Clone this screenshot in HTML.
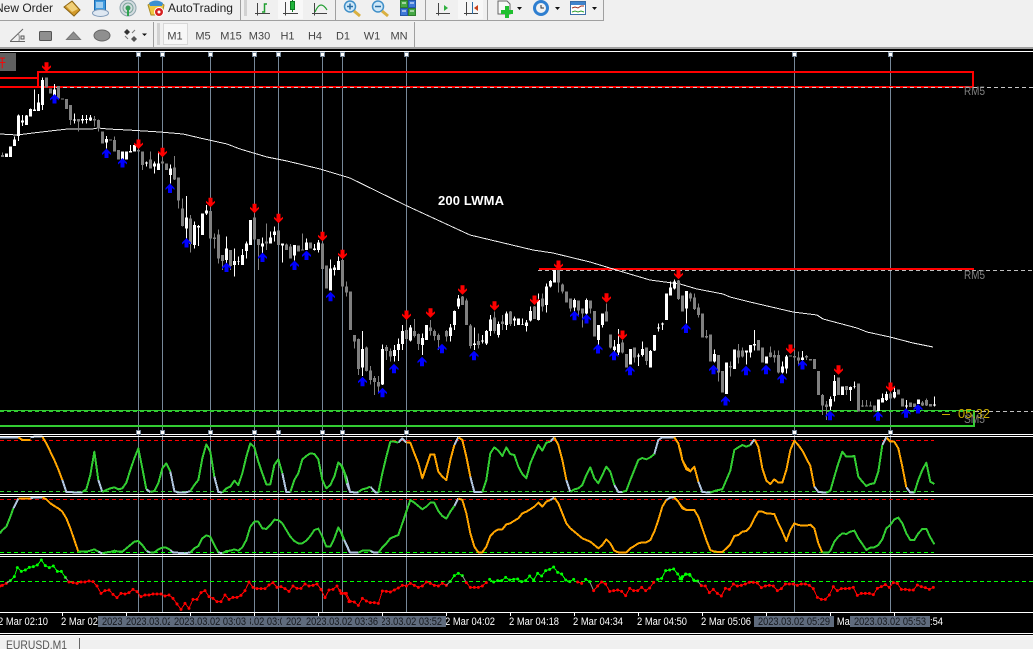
<!DOCTYPE html>
<html><head><meta charset="utf-8"><title>EURUSD.M1</title>
<style>
html,body{margin:0;padding:0;width:1033px;height:649px;overflow:hidden;background:#f0f0f0}
svg{display:block;font-family:"Liberation Sans","Noto Sans CJK SC",sans-serif}
.cw,.cb,.gw,.gb{fill:none;shape-rendering:crispEdges}
.cw{stroke:#fff;stroke-width:3}.cb{stroke:#fff;stroke-width:9}
.gw{stroke:#808080;stroke-width:3}.gb{stroke:#808080;stroke-width:9}
.o,.g,.s{fill:none;stroke-width:6;stroke-linejoin:round;shape-rendering:crispEdges}
.o{stroke:#ffa500}.g{stroke:#32cd32}.s{stroke:#b0c4de}
.r3,.g3{fill:none;stroke-width:3;shape-rendering:crispEdges}
.r3{stroke:#f00;marker-start:url(#mr);marker-mid:url(#mr);marker-end:url(#mr)}
.g3{stroke:#0f0;marker-start:url(#mg);marker-mid:url(#mg);marker-end:url(#mg)}
.y3{fill:none;stroke:#999;stroke-width:3}
.t{fill:#fff;font-size:11px}
.d{fill:#15181d;font-size:11px}
.tf{fill:#444;font-size:11px;text-anchor:middle}
.v{stroke:#778899;stroke-width:1;shape-rendering:crispEdges}
.h{fill:#fff;stroke:#778899;stroke-width:1;shape-rendering:crispEdges}
.ax{fill:none;stroke:#444;stroke-width:1;shape-rendering:crispEdges}
.sep{stroke:#a0a0a0;stroke-width:1;shape-rendering:crispEdges}
</style></head><body>
<svg width="1033" height="649" viewBox="0 0 1033 649" xmlns="http://www.w3.org/2000/svg">
<defs>
<marker id="mr" markerUnits="userSpaceOnUse" markerWidth="12" markerHeight="12" refX="6" refY="6"><circle cx="6" cy="6" r="4.5" fill="#f00"/></marker>
<marker id="mg" markerUnits="userSpaceOnUse" markerWidth="12" markerHeight="12" refX="6" refY="6"><circle cx="6" cy="6" r="4.5" fill="#0f0"/></marker>
<polygon id="u" fill="#00f" points="0,0 4.5,4.500 4.500,6.500 2,4.500 2,9.500 -2,9.500 -2,4.500 -4.500,6.500 -4.500,4.500"/>
<polygon id="n" fill="#f00" points="0,0 4.500,-4.500 4.500,-6.500 2,-4.500 2,-9.500 -2,-9.500 -2,-4.500 -4.500,-6.500 -4.500,-4.500"/>
</defs>

<!-- toolbars -->
<rect width="1033" height="48" fill="#f0f0f0"/>
<rect x="0" y="20" width="603" height="1" fill="#a0a0a0"/>
<rect x="603" y="0" width="1" height="21" fill="#a0a0a0"/>
<rect x="0" y="47" width="1033" height="2" fill="#a0a0a0"/>
<text x="-5" y="12" font-size="12" fill="#222">New Order</text>
<text x="168" y="12" font-size="12" fill="#222">AutoTrading</text>

<!-- order book -->
<polygon points="72,1 80,10 74,16 64,7" fill="#d39a2a" stroke="#8a6414" stroke-width="1"/>
<polygon points="72,2 78,9 72,12 66,6" fill="#f0cf78"/>
<!-- market watch doc + cloud -->
<rect x="94.500" y="0" width="11" height="10" fill="#3f9be0" stroke="#1d6bb0"/>
<path d="M96 3h7M96 5h7M96 7h7" stroke="#fff"/>
<ellipse cx="100.500" cy="13" rx="8" ry="3.500" fill="#dfe8f2" stroke="#7f9ab8"/>
<!-- signal -->
<circle cx="128" cy="8" r="8" fill="#d5dde0" stroke="#8fa5ad"/>
<circle cx="128" cy="8" r="5" fill="none" stroke="#7ba59a"/>
<circle cx="128" cy="8" r="2.500" fill="#3c9a5c"/>
<path d="M128 8v8" stroke="#2fa44f" stroke-width="2"/>
<!-- autotrading -->
<path d="M148 5q8-6 16 0l-2 10h-11z" fill="#f0c840" stroke="#a88a25"/>
<path d="M149 3q7-5 14 0l-1 3h-12z" fill="#3b8fd0"/>
<circle cx="159" cy="12" r="4.500" fill="#d62020" stroke="#fff"/>
<circle cx="159" cy="12" r="1.500" fill="#fff"/>

<line class="sep" x1="240.500" y1="0" x2="240.500" y2="20"/>
<path d="M244 1h3M244 3h3M244 5h3M244 7h3M244 9h3M244 11h3M244 13h3M244 15h3" stroke="#b4b4b4" stroke-width="1" shape-rendering="crispEdges"/>
<!-- bar chart -->
<path class="ax" d="M257.500 3V15.500M255 13.500H270"/>
<path d="M262 12H264.500V4H267" stroke="#1f9d2f" stroke-width="1.500" fill="none"/>
<!-- candle button -->
<rect x="278" y="0" width="25" height="19" fill="#f8f8f8"/>
<path class="ax" d="M285.500 2V15.500M283 13.500H298"/>
<rect x="290.500" y="1.500" width="4" height="8" fill="#1fb43a" stroke="#0d7a22" shape-rendering="crispEdges"/>
<path d="M292.500 0V12" stroke="#0d7a22" shape-rendering="crispEdges"/>
<rect x="291" y="2" width="3" height="7" fill="#1fb43a"/>
<!-- line chart -->
<path class="ax" d="M314.500 3V15.500M312 13.500H327"/>
<path d="M315 12Q318 5 321 5T327 10" fill="none" stroke="#1f9d2f" stroke-width="1.200"/>
<line class="sep" x1="335.500" y1="0" x2="335.500" y2="20"/>
<!-- zoom in -->
<circle cx="350" cy="6.500" r="5.500" fill="#cfe8f8" stroke="#3f8fc8" stroke-width="1.500"/>
<path d="M347 6.500h6M350 3.500v6" stroke="#2a6ea5" stroke-width="1.500"/>
<path d="M354 11l6 5" stroke="#d9b040" stroke-width="3"/>
<!-- zoom out -->
<circle cx="378" cy="6.500" r="5.500" fill="#cfe8f8" stroke="#3f8fc8" stroke-width="1.500"/>
<path d="M375 6.500h6" stroke="#2a6ea5" stroke-width="1.500"/>
<path d="M382 11l6 5" stroke="#d9b040" stroke-width="3"/>
<!-- grid -->
<g shape-rendering="crispEdges">
<rect x="400.500" y="0.500" width="7" height="7" fill="#45a845" stroke="#2e7d2e"/>
<rect x="408.500" y="0.500" width="7" height="7" fill="#3d78d8" stroke="#2456a8"/>
<rect x="400.500" y="8.500" width="7" height="7" fill="#3d78d8" stroke="#2456a8"/>
<rect x="408.500" y="8.500" width="7" height="7" fill="#45a845" stroke="#2e7d2e"/>
<path d="M402 3h4M410 3h4M402 11h4M410 11h4" stroke="#fff"/>
</g>
<line class="sep" x1="425.500" y1="0" x2="425.500" y2="20"/>
<path class="ax" d="M438.500 3V15.500M436 13.500H450"/>
<polygon points="444,5 444,11 448,8" fill="#2fb03f"/>
<rect x="458" y="0" width="25" height="19" fill="#f7f7f7"/>
<path class="ax" d="M466.500 2V15.500M464 13.500H478"/>
<path d="M472.500 2V14" stroke="#2a6ea5" shape-rendering="crispEdges"/>
<polygon points="474,8 478,5 478,11" fill="#c8401a"/>
<line class="sep" x1="487.500" y1="0" x2="487.500" y2="20"/>
<!-- new chart -->
<path d="M498 1h9l3 3v10h-12z" fill="#f8f8f8" stroke="#666"/>
<path d="M507 6v12M501 12h12" stroke="#1fc02f" stroke-width="4"/>
<polygon points="517,7 522,7 519.500,10" fill="#111"/>
<!-- clock -->
<circle cx="541" cy="8" r="8" fill="#2f7fd0"/>
<circle cx="541" cy="8" r="5" fill="#f2f2f2"/>
<path d="M541 5v3h3" stroke="#333" fill="none"/>
<polygon points="555,7 560,7 557.500,10" fill="#111"/>
<!-- templates -->
<rect x="570.500" y="1.500" width="15" height="13" fill="#fff" stroke="#3a6ea8"/>
<rect x="571" y="2" width="14" height="3" fill="#3f83cc"/>
<path d="M572 8l3-1 3 1 3-2 3 0" stroke="#a03020" fill="none"/>
<path d="M572 12l3-1 3 1 3-1 3 1" stroke="#30a030" fill="none"/>
<polygon points="592,7 597,7 594.500,10" fill="#111"/>

<!-- row 2 -->
<path d="M10 41.500H25M10.500 41L23 29" stroke="#666" fill="none"/>
<path d="M18 33q2 3 1 8" stroke="#888" fill="none"/>
<rect x="21" y="36" width="3" height="3" fill="none" stroke="#555"/>
<rect x="39.500" y="31.500" width="12" height="9" rx="1" fill="#8f8f8f" stroke="#555"/>
<polygon points="66.500,39.500 73.500,32 80.500,39.500" fill="#8f8f8f" stroke="#777"/>
<ellipse cx="102" cy="35.500" rx="8" ry="5.500" fill="#8f8f8f" stroke="#666"/>
<polygon points="127,29 130,32 127,35 124,32" fill="#333"/>
<polygon points="134,36 137,39 134,42 131,39" fill="#555"/>
<path d="M125 36l3 3M135 30l-3 3" stroke="#777"/>
<polygon points="142,33.500 147,33.500 144.500,36" fill="#111"/>
<line class="sep" x1="153.500" y1="22" x2="153.500" y2="47"/>
<path d="M157 24h3M157 26h3M157 28h3M157 30h3M157 32h3M157 34h3M157 36h3M157 38h3M157 40h3M157 42h3M157 44h3" stroke="#b4b4b4" stroke-width="1" shape-rendering="crispEdges"/>
<rect x="163.500" y="23.500" width="24" height="21" fill="#f7f7f7" stroke="#d8d8d8"/>
<g>
<text class="tf" x="175" y="39.500">M1</text><text class="tf" x="203" y="39.500">M5</text><text class="tf" x="231" y="39.500">M15</text>
<text class="tf" x="259.500" y="39.500">M30</text><text class="tf" x="287.500" y="39.500">H1</text><text class="tf" x="315" y="39.500">H4</text>
<text class="tf" x="343" y="39.500">D1</text><text class="tf" x="372" y="39.500">W1</text><text class="tf" x="399" y="39.500">MN</text>
</g>
<line class="sep" x1="414.500" y1="22" x2="414.500" y2="47"/>

<!-- chart area -->
<rect x="0" y="49" width="1033" height="587" fill="#000"/>
<rect x="0" y="51" width="1033" height="1" fill="#fff"/>

<!-- vertical lines -->
<path class="v" d="M138.500 52V612M162.500 52V612M210.500 52V612M254.500 52V612M278.500 52V612M322.500 52V612M342.500 52V612M406.500 52V612M794.500 52V612M890.500 52V612"/>

<!-- label top-left -->
<rect x="0" y="53" width="16" height="18" fill="#606060"/>
<text x="-6" y="67" font-size="12" fill="#f00">开</text>

<!-- levels -->
<g shape-rendering="crispEdges">
<rect x="0" y="77" width="38" height="2" fill="#f00"/>
<rect x="37" y="71" width="2" height="17" fill="#f00"/>
<rect x="38" y="71" width="936" height="2" fill="#f00"/>
<rect x="972" y="71" width="2" height="17" fill="#f00"/>
<rect x="0" y="86" width="974" height="2" fill="#f00"/>
<line x1="56" y1="87.500" x2="1033" y2="87.500" stroke="#c8c8c8" stroke-dasharray="4 3"/>
<rect x="539" y="268" width="435" height="2" fill="#f00"/>
<line x1="538" y1="270.500" x2="1033" y2="270.500" stroke="#c0c0c0" stroke-dasharray="4 3"/>
<line x1="975" y1="411.500" x2="1033" y2="411.500" stroke="#c0c0c0" stroke-dasharray="4 3"/>
<rect x="0" y="410" width="974" height="1" fill="#32cd32"/>
<line x1="0" y1="411.500" x2="974" y2="411.500" stroke="#32cd32" stroke-dasharray="4 3"/>
<rect x="0" y="425" width="975" height="2" fill="#32cd32"/>
<rect x="973" y="410" width="2" height="17" fill="#32cd32"/>
</g>
<text x="964" y="95" font-size="12" fill="#808080" textLength="21" lengthAdjust="spacingAndGlyphs">RM5</text>
<text x="964" y="279" font-size="12" fill="#808080" textLength="21" lengthAdjust="spacingAndGlyphs">RM5</text>
<rect x="942" y="414" width="8" height="1" fill="#c9a800"/>
<text x="958" y="418" font-size="13" fill="#c8ac00" textLength="32" lengthAdjust="spacingAndGlyphs">05:32</text>
<text x="964" y="423" font-size="12" fill="#808080" textLength="21" lengthAdjust="spacingAndGlyphs">SM5</text>
<text x="438" y="205" font-size="13" font-weight="bold" fill="#fff" textLength="66">200 LWMA</text>

<!-- 200 LWMA -->
<polyline fill="none" stroke="#eee" stroke-width="1" shape-rendering="crispEdges" points="0,134 17,135 33,133 50,131 68,129 92,129 98,128 108,129 128,130 160,132 183,134 200,138 227,144 240,149 267,157 287,161 320,169 350,178 405,205 470,235 533,250 553,253 590,262 623,272 650,280 680,284 697,289 723,294 730,297 750,302 793,312 817,315 823,319 857,328 867,332 890,337 913,343 933,347"/>

<!-- candles group A -->
<g transform="translate(.17,100) scale(.33333)">
<path class="gw" d="M7 157V171M211 15V75M235 57V95M283 48V80M295 58V95M343 110V155M427 155V210M451 155V205M487 145V195M523 168V240M535 232V325M547 295V380M571 345V458M643 400V445M655 388V490M667 465V510M691 450V510M763 345V418M775 417V510M799 370V450M859 430V450M871 432V475M907 400V450M1027 480V565M1039 545V590"/>
<path class="gb" d="M7 165V171M139 -68V-38M151 -35V-20M175 -42V-5M187 -5V-2M199 -3V27M211 15V60M235 57V65M283 57V62M295 60V85M307 95V130M331 118V122M343 120V155M355 150V178M415 150V155M427 155V195M451 178V205M487 185V190M499 190V210M523 202V238M535 232V302M547 325V378M571 355V432M631 333V415M643 413V417M655 403V475M667 465V483M691 450V498M763 353V418M775 417V435M799 425V430M835 392V435M859 433V450M871 440V475M895 437V455M907 448V452M931 427V445M967 430V507M979 497V565M1027 480V560M1039 560V577"/>
<path class="cw" d="M43 110V138M55 43V123M67 45V78M79 45V75M91 25V50M103 -32V33M115 -18V33M127 -68V30M163 -48V0M223 40V70M247 45V70M259 45V70M271 45V63M319 108V145M391 135V158M439 185V200M463 185V220M475 155V210M511 193V250M559 288V415M583 365V445M595 375V438M619 315V345M679 410V490M703 445V530M715 470V495M727 447V495M739 425V475M787 413V470M811 395V430M823 380V425M847 430V487M883 435V482M919 415V450M943 432V452M955 420V458M991 478V572M1003 495V527M1015 470V510"/>
<path class="cb" d="M19 160V171M31 140V171M43 118V138M55 47V108M67 62V68M79 47V75M91 27V50M103 28V33M115 8V33M127 -60V15M163 -32V-5M223 58V62M247 57V62M259 57V60M271 53V62M319 117V128M367 155V178M379 155V178M391 153V158M403 135V155M439 187V190M463 191V200M475 190V210M511 205V225M559 352V385M583 375V435M595 378V382M607 340V405M619 331V340M679 445V480M703 483V495M715 483V485M727 465V495M739 430V453M751 360V435M787 430V440M811 412V430M823 395V405M847 430V437M883 435V467M919 428V450M943 445V450M955 428V450M991 505V572M1003 503V510M1015 483V510"/>
</g>

<!-- candles group B -->
<g transform="translate(340.17,250) scale(.33333)">
<path class="gw" d="M43 255V295M55 265V375M79 290V365M91 348V403M103 378V435M115 378V430M139 285V330M151 295V335M199 210V270M223 207V262M235 250V300M271 210V257M283 238V272M295 250V300M319 240V275M367 138V165M379 145V225M391 222V295M415 250V295M463 185V250M487 195V240M511 183V228M583 168V207M607 130V185M655 60V128M667 100V130M691 145V185M715 152V195M727 175V233M751 152V190M763 183V260M799 160V215M811 253V295M847 270V310M883 292V337M919 292V345M1015 90V150M1027 137V185"/>
<path class="gb" d="M31 125V240M43 255V275M55 267V357M79 292V363M91 362V390M103 384V396M115 396V410M139 291V303M151 303V320M199 240V267M223 243V258M235 252V282M271 232V243M283 243V258M295 255V270M319 243V260M367 140V165M379 152V225M391 227V288M415 273V285M463 202V243M487 215V222M511 185V222M583 170V207M607 145V170M655 60V98M667 103V125M679 125V157M691 145V175M715 152V182M727 175V190M751 152V175M763 183V260M799 185V215M811 253V293M847 278V308M859 312V352M883 292V323M919 292V333M1015 92V147M1027 137V185"/>
<path class="cw" d="M67 243V378M127 283V405M163 285V335M175 265V333M187 225V300M211 225V275M247 250V315M331 222V275M343 182V240M355 135V177M403 232V300M427 255V280M439 240V285M451 195V258M475 215V262M499 185V240M523 200V228M547 205V225M559 210V245M571 170V215M595 130V212M619 100V188M631 90V112M703 145V185M739 145V195M775 225V300M787 190V233M823 270V320M835 237V315M871 297V343M895 310V348M907 275V320M931 300V353M943 255V303M955 220V245M967 218V240M991 95V137M1003 88V118M1039 123V220"/>
<path class="cb" d="M67 297V353M127 297V404M163 300V318M175 282V300M187 243V282M211 232V272M247 264V285M259 225V270M331 232V258M343 183V225M355 145V170M403 280V285M427 272V275M439 243V280M451 208V243M475 222V255M499 190V225M523 205V212M535 205V225M547 222V224M559 218V228M571 183V212M595 150V210M619 110V165M631 93V110M643 60V98M703 150V172M739 150V190M775 225V270M787 190V225M823 290V300M835 282V308M871 297V343M895 316V319M907 297V315M931 303V353M943 255V302M955 232V236M967 220V224M979 130V210M991 112V137M1003 95V115M1039 123V175"/>
</g>

<!-- candles group C -->
<g transform="translate(680.17,260) scale(.33333)">
<path class="gw" d="M31 97V125M43 100V150M55 130V172M79 210V235M115 285V365M151 305V350M175 252V310M187 262V293M271 260V292M283 272V307M295 272V340M355 275V315M379 285V300M415 333V405M427 402V465M439 423V480M499 378V405M547 420V441M559 420V440M571 425V440M727 423V438M739 415V438"/>
<path class="gb" d="M31 100V115M43 113V147M55 143V165M67 160V232M79 228V232M91 224V305M115 285V337M127 333V398M151 318V323M175 272V293M187 272V290M235 240V272M247 262V307M271 277V291M283 285V293M295 285V338M343 288V292M331 287V290M355 292V302M379 288V292M391 297V301M403 297V327M415 333V405M427 405V437M439 433V441M475 352V405M499 378V390M535 370V455M547 437V440M559 436V440M571 436V440M583 437V455M631 400V416M655 388V403M667 415V440M691 427V441M703 430V441M727 428V436M739 420V436M751 432V440"/>
<path class="cw" d="M103 268V307M139 308V402M199 272V313M211 255V293M223 210V272M259 290V310M307 305V340M319 285V340M367 273V302M451 410V450M463 345V425M511 380V423M523 365V385M595 418V453M607 400V428M619 395V423M643 382V415M679 420V445M715 418V432M763 410V440"/>
<path class="cb" d="M103 282V305M139 308V402M163 268V327M199 272V277M211 255V278M223 252V256M259 290V310M307 320V337M319 290V325M367 292V300M451 417V440M463 363V408M487 380V405M511 381V390M523 379V381M595 418V453M607 414V428M619 402V420M643 396V413M679 436V440M715 418V432M763 433V437"/>
</g>

<!-- arrows -->
<g>
<use href="#u" x="54.500" y="94"/><use href="#u" x="106.500" y="148.500"/><use href="#u" x="122.500" y="158"/><use href="#u" x="170" y="183.500"/><use href="#u" x="186.500" y="238"/><use href="#u" x="226.500" y="262.500"/><use href="#u" x="262.500" y="252.500"/><use href="#u" x="294.500" y="260.500"/><use href="#u" x="306.500" y="250.500"/><use href="#u" x="330.500" y="291.700"/>
<use href="#u" x="362.500" y="376.700"/><use href="#u" x="382.500" y="387.700"/><use href="#u" x="394" y="363.700"/><use href="#u" x="422" y="356.700"/><use href="#u" x="442" y="343.700"/><use href="#u" x="474" y="350.700"/><use href="#u" x="574.500" y="310.700"/><use href="#u" x="586.500" y="314"/><use href="#u" x="598" y="344"/><use href="#u" x="614" y="350.700"/><use href="#u" x="630" y="365.700"/><use href="#u" x="686" y="323.500"/>
<use href="#u" x="713.500" y="364.700"/><use href="#u" x="725.500" y="396"/><use href="#u" x="746" y="365.700"/><use href="#u" x="766" y="364.700"/><use href="#u" x="782" y="373.700"/><use href="#u" x="802.500" y="360"/><use href="#u" x="830" y="410.700"/><use href="#u" x="878" y="411.300"/><use href="#u" x="906" y="408.300"/><use href="#u" x="918" y="404"/>
<use href="#n" x="46.500" y="71.700"/><use href="#n" x="138.500" y="149"/><use href="#n" x="162.500" y="157.300"/><use href="#n" x="210.500" y="207.300"/><use href="#n" x="254.500" y="213.300"/><use href="#n" x="278.500" y="223.300"/><use href="#n" x="322.500" y="241.300"/><use href="#n" x="342.500" y="259.300"/>
<use href="#n" x="406.500" y="320"/><use href="#n" x="430.500" y="317.700"/><use href="#n" x="462.500" y="294.700"/><use href="#n" x="494.500" y="310.700"/><use href="#n" x="534.500" y="305"/><use href="#n" x="558.500" y="270"/><use href="#n" x="606.500" y="302.700"/><use href="#n" x="622.500" y="340"/><use href="#n" x="678.500" y="279.300"/>
<use href="#n" x="790.500" y="354"/><use href="#n" x="838.500" y="374.700"/><use href="#n" x="890.500" y="392"/>
</g>

<!-- indicator levels -->
<g shape-rendering="crispEdges">
<line x1="0" y1="440.500" x2="934" y2="440.500" stroke="#f00" stroke-dasharray="4 3"/>
<line x1="0" y1="491.500" x2="934" y2="491.500" stroke="#32cd32" stroke-dasharray="4 3"/>
<line x1="0" y1="499.500" x2="934" y2="499.500" stroke="#d00" stroke-dasharray="4 3"/>
<line x1="0" y1="552.500" x2="934" y2="552.500" stroke="#0f0" stroke-dasharray="4 3"/>
<line x1="0" y1="581.500" x2="1033" y2="581.500" stroke="#0f0" stroke-dasharray="4 3"/>
</g>

<!-- panels: left -->
<g transform="translate(0,430) scale(.33333)">
<path class="s" d="M0 22 55 22M91 22 103 20 127 20M187 150 199 186 247 188M295 150 307 186M439 178 451 186M511 125 523 183 535 188 555 188 571 183M643 140 655 186 667 188M847 130 859 186 871 186M1039 140 1050 185"/>
<path class="o" d="M55 22 67 30 91 30M127 20 139 40 151 65 163 90 175 118 187 150"/>
<path class="g" d="M247 186 259 178 271 135 283 65 295 150M307 186 319 180 331 175 343 172 355 178 367 175 379 158 391 120 403 85 415 55 427 115 439 178M451 186 463 183 475 160 487 115 499 100 511 125M571 183 583 165 595 150 607 85 619 43 631 65 643 140M667 188 679 175 691 170 703 152 715 165 727 130 739 80 751 40 763 52 775 95 787 130 799 163 811 163 823 105 835 88 847 130M871 186 883 150 895 130 907 88 919 78 931 70 943 72 955 88 967 150 979 175 991 165 1003 140 1015 97 1027 110 1039 140"/>
<path class="g" d="M0 310 7 300 19 290 31 260 40 235"/>
<path class="s" d="M40 235 47 222 55 205M91 205 103 202 127 202M295 365 307 370M439 362 451 368M511 360 519 367 555 370 571 367M655 367 667 370M1039 345 1050 368"/>
<path class="o" d="M55 205 91 205M127 202 139 208 151 220 163 228 175 235 187 245 199 265 211 295 223 330 235 365"/>
<path class="g" d="M235 365 259 365 271 362 283 358 295 365M307 370 319 367 331 366 343 362 355 365 367 365 379 355 391 345 403 335 415 333 427 345 439 362M451 368 463 367 475 358 487 353 499 353 511 360M571 367 583 355 595 348 607 325 619 316 631 320 643 345 655 367M667 370 679 363 691 362 703 358 715 362 727 352 739 330 751 290 763 275 775 275 787 295 799 297 811 285 823 269 835 270 847 280 859 300 871 320 883 333 895 340 907 340 919 332 931 318 943 300 955 296 967 320 979 350 991 350 1003 325 1015 292 1027 315 1039 345"/>
<path class="r3" d="M0 468 7 466 19 460"/>
<path class="g3" d="M31 452 43 440 52 413 64 424 76 420 88 412 100 410 112 405 124 390 136 407 148 413 160 408 172 424 184 424 196 442"/>
<path class="y3" d="M19 460 31 452M196 442 207 456"/>
<path class="r3" d="M207 456 219 458 231 460 243 456 255 456 267 453 279 455 291 468 303 490 315 482 327 480 339 493 351 503 363 490 375 492 387 488 399 478 411 485 423 500 435 495 447 495 459 492 471 492 483 492 495 498 507 495 519 505 531 522 543 538 555 520 567 535 579 508 591 508 603 488 615 482 627 500 639 505 651 515 663 515 675 495 687 508 699 502 711 502 723 496 735 482 747 456 759 472 771 476 783 476 795 476 807 465 819 458 831 472 843 470 855 476 867 484 879 468 891 475 903 475 915 462 927 468 939 466 951 462 963 478 975 503 987 480 999 478 1011 468 1023 490 1035 490 1047 515"/>
</g>

<!-- panels: middle -->
<g transform="translate(340,430) scale(.33333)">
<path class="g" d="M0 100 12 125 20 160"/>
<path class="s" d="M20 160 30 186 55 188M91 170 100 180 107 188 115 188M175 38 187 25 199 38M343 45 355 22M391 140 403 186 427 186M631 35 643 22M679 150 691 186M823 165 835 186 847 186M943 72 955 30 967 22 1003 22"/>
<path class="g" d="M55 186 67 178 79 175 91 170M115 188 127 130 139 80 151 35 163 35 175 38M427 186 439 150 451 70 463 52 475 62 487 78 499 52 511 72 523 75 535 110 547 132 559 145 571 100 583 72 595 45 607 62 619 38 631 35M691 186 703 178 715 175 727 165 739 135 751 112 763 145 775 160 787 135 799 110 811 125 823 165M847 186 859 182 871 150 883 120 895 90 907 84 919 88 931 82 943 72"/>
<path class="o" d="M199 38 211 38 223 70 235 100 247 145 259 110 271 73 283 73 295 125 307 140 319 150 331 90 343 45M355 22 367 30 379 80 391 140M643 22 655 45 667 90 679 150M1003 22 1015 40 1027 90 1039 112 1050 122"/>
<path class="s" d="M343 228 355 205M631 210 643 203M979 210 991 203 1003 203M12 330 20 345 30 367 55 368M91 362 100 367 115 368"/>
<path class="g" d="M0 300 12 330M55 368 67 362 79 362 91 362M115 368 127 352 139 340 151 325 163 320 175 315 187 280 199 245 211 210 223 218 235 228 247 238 259 230 271 218 283 218 295 243 307 258 319 266 331 245 343 228"/>
<path class="o" d="M355 205 367 210 379 250 391 310 403 350 415 367 427 367 439 350 451 318 463 305 475 298 487 298 499 283 511 280 523 272 535 265 547 250 559 245 571 238 583 230 595 218 607 230 619 215 631 210M643 203 655 220 667 250 679 280 691 295 703 305 715 315 727 325 739 330 751 335 763 345 775 355 787 345 799 328 811 340 823 362 835 367 859 367 871 355 883 348 895 340 907 337 919 337 931 330 943 305 955 270 967 230 979 210M1003 203 1015 215 1027 235 1039 240 1050 240"/>
<path class="r3" d="M0 482 7 490 19 490 31 514 43 516 55 526 67 505 79 513 91 518 103 518 115 520 127 483 139 484 151 486 163 480 175 474 187 466 199 468 211 460 223 466 235 472 247 468 259 456 271 460 283 466 295 468 307 460 319 466"/>
<path class="g3" d="M331 454 343 437 355 430 367 437"/>
<path class="y3" d="M319 466 331 454M367 437 379 458M749 455 761 482"/>
<path class="r3" d="M379 458 391 472 403 472 415 472 427 468 439 458"/>
<path class="g3" d="M449 448 461 456 473 452 485 452 497 442 509 450 521 448 533 447 545 455 557 452 569 438 581 450 593 430 605 438 617 422 629 418 641 411 653 427 665 432 677 450 689 455 701 448"/>
<path class="r3" d="M713 456 725 460"/>
<path class="g3" d="M737 448 749 455"/>
<path class="r3" d="M761 482 773 468 785 456 797 462 809 484 821 482 833 480 845 484 857 497 869 475 881 482 893 482 905 472 917 482 929 474 941 457"/>
<path class="g3" d="M953 448 965 445 977 422 989 420 1001 417 1013 432 1025 447 1037 433 1050 436"/>
</g>

<!-- panels: right -->
<g transform="translate(680,430) scale(.33333)">
<path class="o" d="M0 55 7 90 19 118 31 124 43 110 55 155M223 28 235 50 247 115 259 152 271 162 283 148 295 158 307 158 319 120 331 60 343 32 355 45 367 62 379 85 391 108 403 170M619 22 631 35 643 35 655 55 667 110 679 172"/>
<path class="s" d="M55 155 67 186 91 188M211 45 223 28M403 170 415 186 439 188M607 45 619 22M679 172 691 188 703 188"/>
<path class="g" d="M91 188 103 183 115 180 127 178 139 150 151 122 163 60 175 52 187 45 199 50 211 45M439 188 451 182 463 140 475 100 487 65 499 80 511 80 523 78 535 140 547 155 559 168 571 162 583 160 595 125 607 45M703 188 715 150 727 120 739 98 751 155 763 162"/>
<path class="o" d="M0 222 7 232 19 240 43 240 55 260 67 295 79 330 91 360 103 365 127 366 139 355 151 343 163 318 175 315 187 305 199 303 211 290 223 265 235 245 247 245 259 250 283 252 295 280 307 305 319 333 331 300 343 280 355 285 367 287 379 287 391 284 403 295 415 340 427 368"/>
<path class="g" d="M427 368 445 368 451 362 463 335 475 320 487 310 499 312 511 305 523 302 535 325 547 342 559 360 571 353 583 352 595 345 607 328 619 295 631 285 643 268 655 263 667 280 679 310 691 330 703 330 715 310 727 297 739 297 751 322 763 343"/>
<path class="g3" d="M0 446 7 440 17 432 29 433 41 450 53 453"/>
<path class="y3" d="M53 453 64 467"/>
<path class="r3" d="M64 467 76 468 88 488 100 478 112 490 124 498 136 475 148 478 160 462 172 468 184 466 196 462 208 457 220 457 232 459 244 473 256 468 268 466 280 468 292 482 304 476 316 462 328 462 340 462 352 466 364 462 376 462 388 466 400 476 412 502 424 508 436 508 448 495 460 470 472 482 484 476 496 476 508 475 520 472 532 496 544 490 556 490 568 490 580 494 592 475 604 470 616 464 628 472 640 458 652 460 664 478 676 478 688 480 700 480 712 465 724 470 736 473 748 478 760 472"/>
</g>

<!-- separators & handles -->
<g shape-rendering="crispEdges">
<rect y="434" width="1033" height="1" fill="#fff"/><rect y="436" width="1033" height="1" fill="#fff"/>
<rect y="494" width="1033" height="1" fill="#fff"/><rect y="496" width="1033" height="1" fill="#fff"/>
<rect y="554" width="1033" height="1" fill="#fff"/><rect y="556" width="1033" height="1" fill="#fff"/>
<rect y="612" width="1033" height="1" fill="#fff"/>
<rect y="613" width="1033" height="21" fill="#000"/>
<rect y="633" width="1033" height="1" fill="#fff"/><rect y="635" width="1033" height="1" fill="#fff"/>
<path d="M62.500 612V616M126.500 612V616M190.500 612V616M254.500 612V616M318.500 612V616M382.500 612V616M446.500 612V616M510.500 612V616M574.500 612V616M638.500 612V616M702.500 612V616M766.500 612V616M830.500 612V616M894.500 612V616" stroke="#fff"/>
</g>
<g>
<rect class="h" x="136.500" y="52.500" width="4" height="4"/><rect class="h" x="160.500" y="52.500" width="4" height="4"/><rect class="h" x="208.500" y="52.500" width="4" height="4"/><rect class="h" x="252.500" y="52.500" width="4" height="4"/><rect class="h" x="276.500" y="52.500" width="4" height="4"/><rect class="h" x="320.500" y="52.500" width="4" height="4"/><rect class="h" x="340.500" y="52.500" width="4" height="4"/><rect class="h" x="404.500" y="52.500" width="4" height="4"/><rect class="h" x="792.500" y="52.500" width="4" height="4"/><rect class="h" x="888.500" y="52.500" width="4" height="4"/>
<rect class="h" x="136.500" y="430.500" width="4" height="4"/><rect class="h" x="160.500" y="430.500" width="4" height="4"/><rect class="h" x="208.500" y="430.500" width="4" height="4"/><rect class="h" x="252.500" y="430.500" width="4" height="4"/><rect class="h" x="276.500" y="430.500" width="4" height="4"/><rect class="h" x="320.500" y="430.500" width="4" height="4"/><rect class="h" x="340.500" y="430.500" width="4" height="4"/><rect class="h" x="404.500" y="430.500" width="4" height="4"/><rect class="h" x="792.500" y="430.500" width="4" height="4"/><rect class="h" x="888.500" y="430.500" width="4" height="4"/>
</g>

<!-- time labels -->
<g>
<text class="t" x="-2" y="625" textLength="50" lengthAdjust="spacingAndGlyphs">2 Mar 02:10</text>
<text class="t" x="61" y="625" textLength="50" lengthAdjust="spacingAndGlyphs">2 Mar 02:26</text>
<text class="t" x="445" y="625" textLength="50" lengthAdjust="spacingAndGlyphs">2 Mar 04:02</text>
<text class="t" x="509" y="625" textLength="50" lengthAdjust="spacingAndGlyphs">2 Mar 04:18</text>
<text class="t" x="573" y="625" textLength="50" lengthAdjust="spacingAndGlyphs">2 Mar 04:34</text>
<text class="t" x="637" y="625" textLength="50" lengthAdjust="spacingAndGlyphs">2 Mar 04:50</text>
<text class="t" x="701" y="625" textLength="50" lengthAdjust="spacingAndGlyphs">2 Mar 05:06</text>
<text class="t" x="829" y="625" textLength="50" lengthAdjust="spacingAndGlyphs">2 Mar 05:38</text>
<text class="t" x="893" y="625" textLength="50" lengthAdjust="spacingAndGlyphs">2 Mar 05:54</text>
</g>
<g>
<rect x="366" y="616" width="80" height="11" fill="#5f6b7d"/><text class="d" x="370" y="625" textLength="72" lengthAdjust="spacingAndGlyphs">2023.03.02 03:52</text>
<rect x="98" y="616" width="80" height="11" fill="#5f6b7d"/><text class="d" x="102" y="625" textLength="72" lengthAdjust="spacingAndGlyphs">2023.03.02 02:58</text>
<rect x="122" y="616" width="80" height="11" fill="#5f6b7d"/><text class="d" x="126" y="625" textLength="72" lengthAdjust="spacingAndGlyphs">2023.03.02 03:01</text>
<rect x="238" y="616" width="80" height="11" fill="#5f6b7d"/><text class="d" x="242" y="625" textLength="72" lengthAdjust="spacingAndGlyphs">2023.03.02 03:15</text>
<rect x="214" y="616" width="80" height="11" fill="#5f6b7d"/><text class="d" x="218" y="625" textLength="72" lengthAdjust="spacingAndGlyphs">2023.03.02 03:09</text>
<rect x="170" y="616" width="80" height="11" fill="#5f6b7d"/><text class="d" x="174" y="625" textLength="72" lengthAdjust="spacingAndGlyphs">2023.03.02 03:03</text>
<rect x="282" y="616" width="80" height="11" fill="#5f6b7d"/><text class="d" x="286" y="625" textLength="72" lengthAdjust="spacingAndGlyphs">2023.03.02 03:31</text>
<rect x="302" y="616" width="80" height="11" fill="#5f6b7d"/><text class="d" x="306" y="625" textLength="72" lengthAdjust="spacingAndGlyphs">2023.03.02 03:36</text>
<rect x="754" y="616" width="80" height="11" fill="#5f6b7d"/><text class="d" x="758" y="625" textLength="72" lengthAdjust="spacingAndGlyphs">2023.03.02 05:29</text>
<rect x="850" y="616" width="80" height="11" fill="#5f6b7d"/><text class="d" x="854" y="625" textLength="72" lengthAdjust="spacingAndGlyphs">2023.03.02 05:53</text>
</g>

<!-- tab bar -->
<rect y="636" width="1033" height="13" fill="#f0f0f0"/>
<text x="6" y="649" font-size="12" fill="#555" textLength="61" lengthAdjust="spacingAndGlyphs">EURUSD.M1</text>
<rect x="79" y="638" width="1" height="11" fill="#666"/>
</svg>
</body></html>
